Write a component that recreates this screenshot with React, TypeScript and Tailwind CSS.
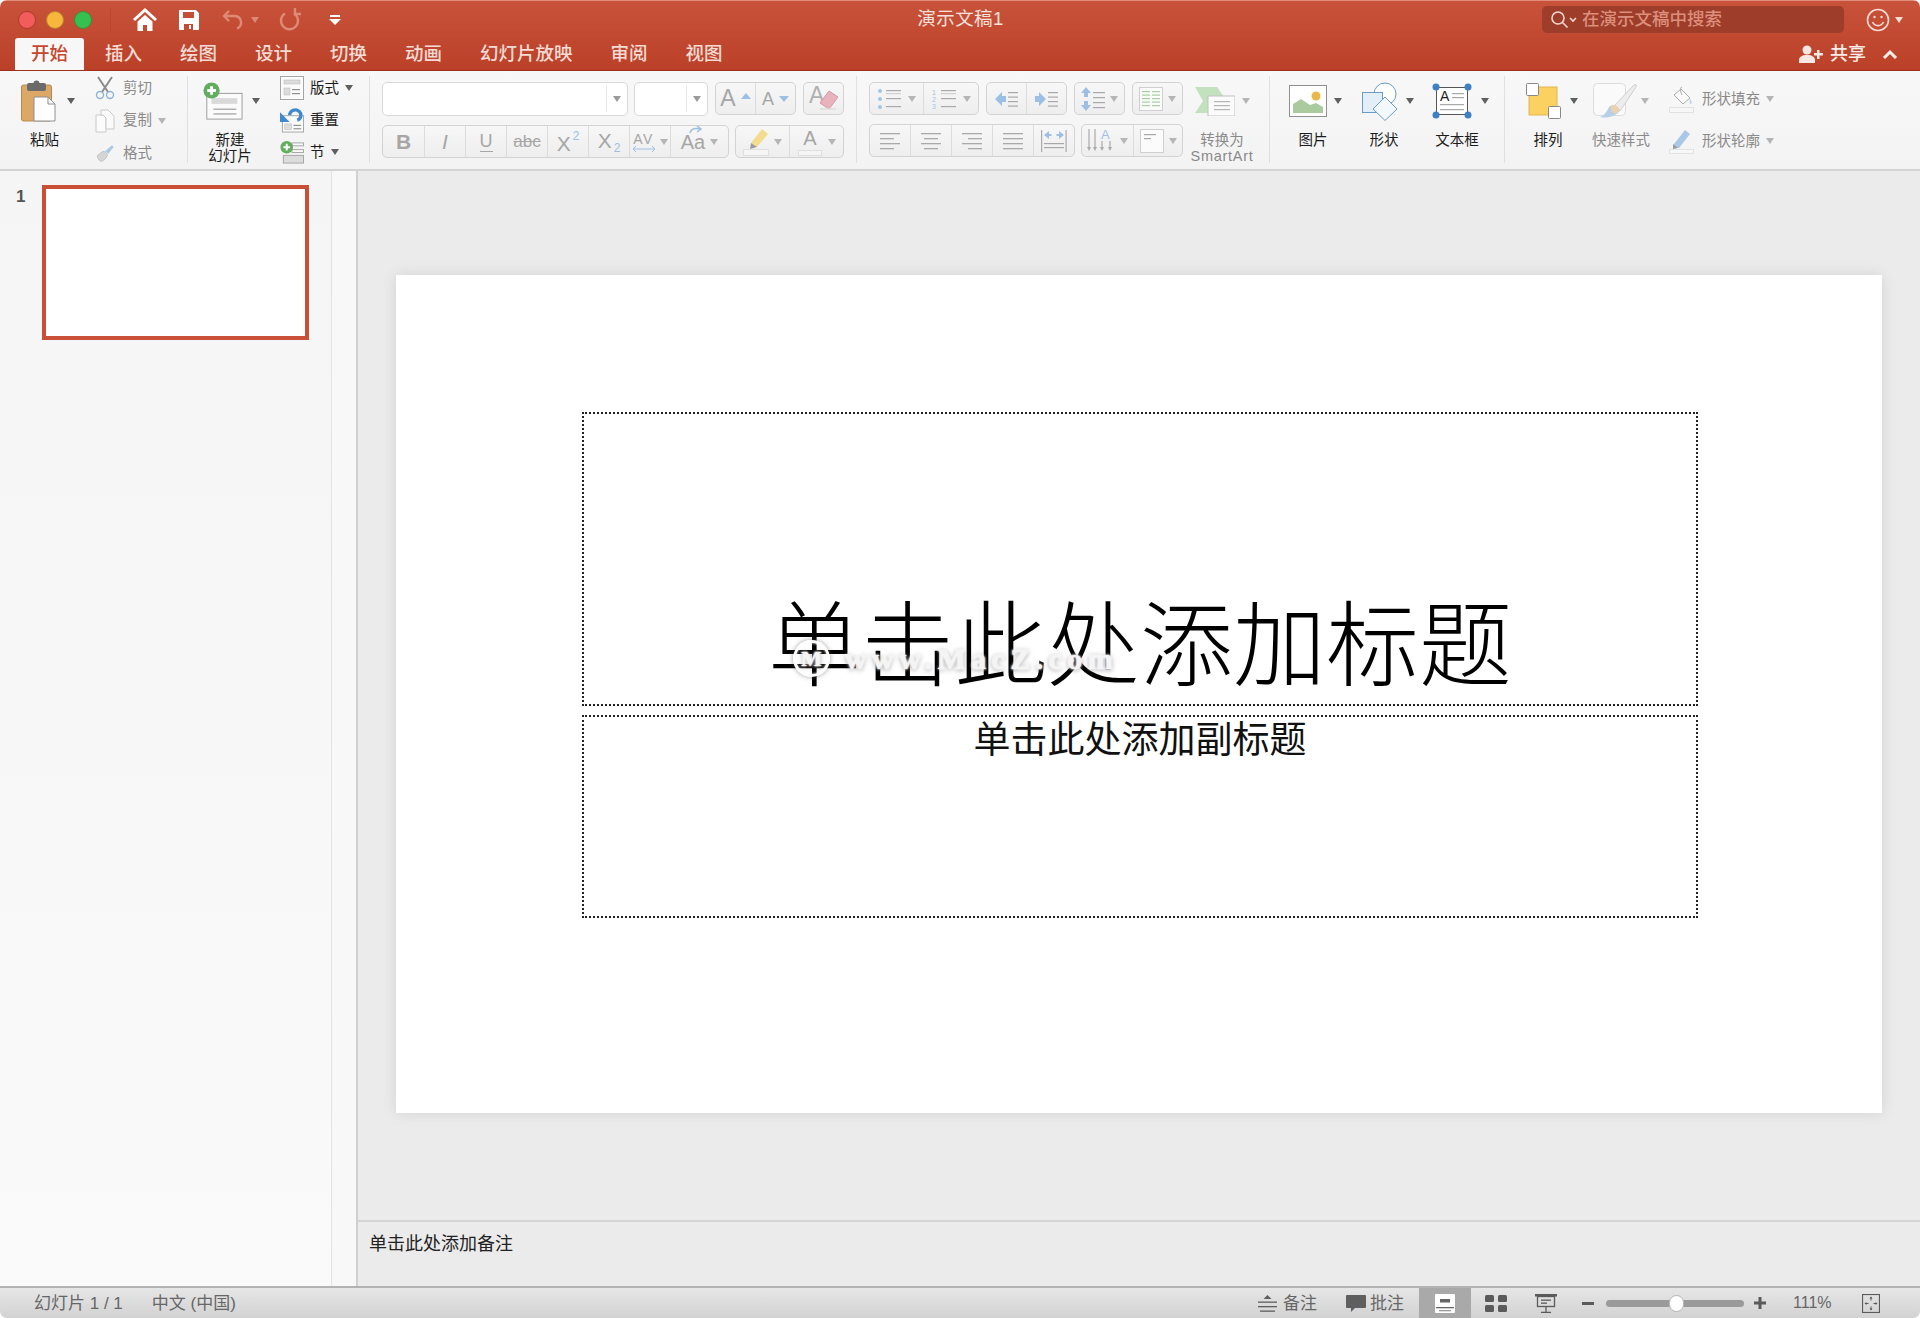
import type { ReactNode } from "react";

const GRAY = "#9a9a9a";

function Caret({ color = "#5f5f5f" }: { color?: string }) {
  return (
    <svg width="8" height="6" viewBox="0 0 8 6" className="shrink-0">
      <path d="M0 0h8L4 6z" fill={color} />
    </svg>
  );
}

function Lines({ x, y, w, n, gap = 5, color = "#a8a8a8" }: { x: number; y: number; w: number; n: number; gap?: number; color?: string }) {
  return (
    <>
      {Array.from({ length: n }).map((_, i) => (
        <rect key={i} x={x} y={y + i * gap} width={w} height="1.2" fill={color} />
      ))}
    </>
  );
}

// title bar icons
const HomeIcon = () => (
  <svg width="26" height="26" viewBox="0 0 26 26">
    <path d="M2 13 13 3l11 10" fill="none" stroke="#fff" strokeWidth="3" />
    <path d="M5.5 14.5 13 8l7.500 6.500V24H15v-6h-4v6H5.500z" fill="#fff" />
  </svg>
);
const SaveIcon = () => (
  <svg width="24" height="24" viewBox="0 0 24 24">
    <path
      fillRule="evenodd"
      d="M3 2h16l3 3v16a1 1 0 0 1-1 1H3a1 1 0 0 1-1-1V3a1 1 0 0 1 1-1zm3 2v6h11V4zm1 12v6h9v-6zm5 1h2v4h-2z"
      fill="#fff"
    />
  </svg>
);
const UndoIcon = () => (
  <svg width="24" height="24" viewBox="0 0 24 24" fill="none" stroke="#dd8a76" strokeWidth="2.4">
    <path d="M8 3 3 8l5 5" />
    <path d="M3 8h11a6.500 6.500 0 0 1 2 12.500" />
  </svg>
);
const RedoIcon = () => (
  <svg width="24" height="24" viewBox="0 0 24 24" fill="none" stroke="#dd8a76" strokeWidth="2.4">
    <path d="M7 5.500a8.500 8.500 0 1 0 9 0" />
    <path d="M17 0v6h6" />
  </svg>
);
const CustomizeIcon = () => (
  <svg width="12" height="12" viewBox="0 0 12 12">
    <rect x="1" y="1" width="10" height="2" fill="#fff" />
    <path d="M0 5h12L6 11z" fill="#fff" />
  </svg>
);
const SearchIcon = () => (
  <svg width="28" height="20" viewBox="0 0 28 20" fill="none" stroke="#f3d9d2" strokeWidth="1.6">
    <circle cx="8" cy="8" r="6" />
    <path d="m12.500 12.500 5 5" />
    <path d="m20 8 3 3 3-3" />
  </svg>
);
const SmileIcon = () => (
  <svg width="24" height="24" viewBox="0 0 24 24" fill="none" stroke="#f6dcd5" strokeWidth="1.6">
    <circle cx="12" cy="12" r="10.500" />
    <circle cx="8.500" cy="9" r="1.200" fill="#f6dcd5" stroke="none" />
    <circle cx="15.500" cy="9" r="1.200" fill="#f6dcd5" stroke="none" />
    <path d="M6.500 14a6 6 0 0 0 11 0" />
  </svg>
);
const ShareIcon = () => (
  <svg width="25" height="18" viewBox="0 0 25 18" fill="#f8e8e4">
    <circle cx="8" cy="5" r="4.500" />
    <path d="M0 18v-3c0-3 3-5 8-5s8 2 8 5v3z" />
    <path d="M18 5h2.500v3H24v2.500h-3.500V14H18v-3.500h-3V8h3z" />
  </svg>
);

// ribbon icons
const PasteIcon = () => (
  <svg width="35" height="42" viewBox="0 0 35 42">
    <rect x="0.500" y="5" width="30" height="36" rx="2" fill="#dba868" stroke="#b98a4f" />
    <rect x="6" y="3" width="19" height="8" rx="2" fill="#6b6b6b" />
    <circle cx="15.500" cy="3.500" r="3" fill="#6b6b6b" />
    <path d="M13 17h14l7 7v17H13z" fill="#fff" stroke="#8f8f8f" />
    <path d="M27 17v7h7" fill="none" stroke="#8f8f8f" />
  </svg>
);
const CutIcon = () => (
  <svg width="20" height="24" viewBox="0 0 20 24" fill="none">
    <path d="M3 1 13 16M17 1 7 16" stroke="#8c8c8c" strokeWidth="2" />
    <circle cx="5" cy="19" r="3.500" stroke="#8fb3d5" strokeWidth="1.400" />
    <circle cx="15" cy="19" r="3.500" stroke="#8fb3d5" strokeWidth="1.400" />
  </svg>
);
const CopyIcon = () => (
  <svg width="20" height="24" viewBox="0 0 20 24" fill="#fbfbfb" stroke="#c9c9c9">
    <path d="M1 6h7l3 3v14H1z" />
    <path d="M6 1h7l6 6v13h-8V9L8 6H6z" />
  </svg>
);
const BrushIcon = () => (
  <svg width="24" height="24" viewBox="0 0 24 24">
    <path d="M3 15c3-3 6-5 8-5l4 4c-1 4-5 8-8 8-1 0-5-4-4-7z" fill="#d5d5d5" stroke="#bdbdbd" />
    <path d="m12 10 8-7c1 0 2 1 2 2l-6 8z" fill="#a9c8e4" />
  </svg>
);
const NewSlideIcon = () => (
  <svg width="42" height="40" viewBox="0 0 42 40">
    <rect x="4" y="12" width="37" height="27" fill="#fbfbfb" stroke="#9a9a9a" />
    <rect x="9" y="17" width="27" height="6" fill="#d9d9d9" />
    <Lines x={11} y={28} w={24} n={2} gap={5} color="#9a9a9a" />
    <circle cx="9" cy="9" r="8.500" fill="#63ad5f" />
    <path d="M7.500 4.500h3v3h3v3h-3v3h-3v-3h-3v-3h3z" fill="#fff" />
  </svg>
);
const LayoutIcon = () => (
  <svg width="24" height="24" viewBox="0 0 24 24">
    <rect x="0.500" y="0.500" width="23" height="23" fill="#fbfbfb" stroke="#a5a5a5" />
    <rect x="4" y="4" width="16" height="4" fill="#dcdcdc" stroke="#b5b5b5" strokeWidth=".5" />
    <rect x="4" y="12" width="6" height="7" fill="#dcdcdc" stroke="#b5b5b5" strokeWidth=".5" />
    <Lines x={12} y={13} w={8} n={2} gap={4} color="#8d8d8d" />
  </svg>
);
const ResetIcon = () => (
  <svg width="25" height="25" viewBox="0 0 25 25">
    <rect x="2.500" y="7.500" width="22" height="17" fill="#fbfbfb" stroke="#a5a5a5" />
    <rect x="5" y="16" width="7" height="6" fill="#dcdcdc" stroke="#b5b5b5" strokeWidth=".5" />
    <Lines x={14} y={17} w={8} n={2} gap={3.500} color="#8d8d8d" />
    <path d="M10 7a6 6 0 0 1 10-4c3 3 2 8-2 9" fill="none" stroke="#3f89cf" strokeWidth="3.500" />
    <path d="M0 4v10h10z" fill="#3f89cf" />
  </svg>
);
const SectionIcon = () => (
  <svg width="25" height="25" viewBox="0 0 25 25">
    <rect x="3.500" y="15.500" width="21" height="8" fill="#dcdcdc" stroke="#a5a5a5" />
    <rect x="12.500" y="2.500" width="12" height="3" fill="#fbfbfb" stroke="#a5a5a5" />
    <rect x="12.500" y="9.500" width="12" height="3" fill="#fbfbfb" stroke="#a5a5a5" />
    <circle cx="7" cy="7" r="6.500" fill="#63ad5f" />
    <path d="M6 3.500h2V6h2.500v2H8v2.500H6V8H3.500V6H6z" fill="#fff" />
  </svg>
);
const SmartArtIcon = () => (
  <svg width="40" height="30" viewBox="0 0 40 30">
    <path d="M0 1h22l10 14-10 12H0l8-12z" fill="#c3e0bf" />
    <rect x="13" y="10" width="27" height="20" fill="#fbfbfb" stroke="#c2c2c2" />
    <Lines x={19} y={15} w={16} n={3} gap={4} color="#b5b5b5" />
  </svg>
);
const PictureIcon = () => (
  <svg width="38" height="32" viewBox="0 0 38 32">
    <rect x="0.500" y="0.500" width="37" height="31" fill="#fff" stroke="#8f8f8f" />
    <circle cx="27" cy="11" r="4.500" fill="#e9b84c" />
    <path d="M4 28v-9l8-5 9 6 6-2 7 4v6z" fill="#a9cb9d" />
  </svg>
);
const ShapeIcon = () => (
  <svg width="36" height="39" viewBox="0 0 36 39">
    <circle cx="23" cy="12" r="11" fill="#fff" stroke="#6a9cc9" />
    <rect x="0.500" y="10.500" width="20" height="20" fill="#e3eef8" stroke="#6a9cc9" />
    <path d="M23 15 35 27 23 38.500 11 27z" fill="#f3f8fc" stroke="#6a9cc9" />
  </svg>
);
const TextBoxIcon = () => (
  <svg width="40" height="36" viewBox="0 0 40 36">
    <rect x="4.500" y="4.500" width="31" height="27" fill="#fff" stroke="#555" />
    <text x="8" y="18" fontSize="14" fontWeight="500" fill="#222" fontFamily="Liberation Sans">A</text>
    <Lines x={20} y={10} w={12} n={2} gap={4} />
    <Lines x={8} y={21} w={24} n={2} gap={5} />
    <circle cx="4" cy="4" r="3.500" fill="#3f7fc6" />
    <circle cx="36" cy="4" r="3.500" fill="#3f7fc6" />
    <circle cx="4" cy="32" r="3.500" fill="#3f7fc6" />
    <circle cx="36" cy="32" r="3.500" fill="#3f7fc6" />
  </svg>
);
const ArrangeIcon = () => (
  <svg width="35" height="36" viewBox="0 0 35 36">
    <rect x="3" y="4" width="28" height="28" fill="#fbd161" stroke="#e1b64c" />
    <rect x="0.500" y="0.500" width="12" height="12" rx="1" fill="#fff" stroke="#888" />
    <rect x="22.500" y="23.500" width="12" height="12" rx="1" fill="#fff" stroke="#888" />
  </svg>
);
const QuickStyleIcon = () => (
  <svg width="45" height="36" viewBox="0 0 45 36">
    <rect x="0.500" y="0.500" width="32" height="32" rx="4" fill="#fafafa" stroke="#dcdcdc" />
    <path d="M20 24 41 2c2-1 3 0 2 2L27 28z" fill="#ededed" stroke="#cfcfcf" />
    <path d="M16 24c3-3 7-3 11 3-3 6-13 9-20 7 5-2 7-6 9-10z" fill="#b8d0e6" />
    <path d="M18 23c3-2 6-1 9 4l-5 4c-3-2-5-5-4-8z" fill="#ecd2b0" />
  </svg>
);
const FillIcon = () => (
  <svg width="25" height="28" viewBox="0 0 25 28">
    <path d="m12 4 9 9-7 6-9-9z" fill="#fafafa" stroke="#aaa" />
    <path d="M13 2c-2 0-2 4 0 8" fill="none" stroke="#aaa" />
    <path d="M21 14c2 2 2 4 1 5s-2-2-1-5z" fill="#bcd3ea" />
    <rect x="0.500" y="22.500" width="24" height="5" fill="#f7f7f7" stroke="#e2e2e2" />
  </svg>
);
const PenIcon = () => (
  <svg width="25" height="25" viewBox="0 0 25 25">
    <path d="m5 15 11-14 5 4-11 14H5z" fill="#a9c8e8" />
    <path d="m4 15 5 4-5 1z" fill="#9a9a9a" />
    <rect x="0.500" y="20.500" width="24" height="4" fill="#f7f7f7" stroke="#e2e2e2" />
  </svg>
);

// small formatting glyphs, drawn in the disabled grey of the ribbon
function ListIcon({ numbered }: { numbered?: boolean }) {
  return (
    <svg width="26" height="22" viewBox="0 0 26 22">
      {numbered ? (
        <>
          <text x="0" y="7" fontSize="7" fill="#a4c4e2" fontFamily="Liberation Sans">1</text>
          <text x="0" y="14" fontSize="7" fill="#a4c4e2" fontFamily="Liberation Sans">2</text>
          <text x="0" y="21" fontSize="7" fill="#a4c4e2" fontFamily="Liberation Sans">3</text>
        </>
      ) : (
        <>
          <circle cx="3" cy="3" r="2" fill="#a4c4e2" />
          <circle cx="3" cy="11" r="2" fill="#a4c4e2" />
          <circle cx="3" cy="19" r="2" fill="#a4c4e2" />
        </>
      )}
      <Lines x={9} y={2} w={15} n={3} gap={8} color="#a9a9a9" />
      <Lines x={9} y={5} w={15} n={1} color="#d0d0d0" />
    </svg>
  );
}
function IndentIcon({ right }: { right?: boolean }) {
  return (
    <svg width="24" height="20" viewBox="0 0 24 20">
      <path d={right ? "M0 7h4V3l7 7-7 7v-4H0z" : "M11 7H7V3l-7 7 7 7v-4h4z"} fill="#9cc0e3" />
      <Lines x={13} y={3} w={10} n={4} gap={4.500} />
    </svg>
  );
}
const SpacingIcon = () => (
  <svg width="24" height="24" viewBox="0 0 24 24">
    <path d="M5 0 10 6H7v4H3V6H0zM5 24l5-6H7v-4H3v4H0z" fill="#9cc0e3" />
    <Lines x={12} y={5} w={12} n={4} gap={5} />
  </svg>
);
const ColumnsIcon = () => (
  <svg width="24" height="24" viewBox="0 0 24 24">
    <rect x="0.500" y="0.500" width="23" height="23" fill="#fbfbfb" stroke="#cfcfcf" />
    <Lines x={3} y={4} w={8} n={5} gap={3.500} color="#a9cfa2" />
    <Lines x={13} y={4} w={8} n={5} gap={3.500} color="#a9cfa2" />
  </svg>
);
function AlignIcon({ kind }: { kind: "left" | "center" | "right" | "justify" }) {
  const rows = [20, 14, 20, 14];
  return (
    <svg width="21" height="18" viewBox="0 0 21 18">
      {rows.map((w, i) => {
        const width = kind === "justify" ? 20 : w;
        const x = kind === "left" || kind === "justify" ? 0 : kind === "center" ? (20 - width) / 2 : 20 - width;
        return <rect key={i} x={x} y={1 + i * 5} width={width} height="1.300" fill="#aaa" />;
      })}
    </svg>
  );
}
const DistributeIcon = () => (
  <svg width="26" height="24" viewBox="0 0 26 24">
    <rect x="0" y="1" width="1.200" height="22" fill="#aaa" />
    <rect x="24.500" y="1" width="1.200" height="22" fill="#aaa" />
    <path d="M3 6 8 2v3h2.500v2H8v3zM23 6l-5-4v3h-2.500v2H18v3z" fill="#9cc0e3" />
    <Lines x={3} y={14} w={20} n={2} gap={4} />
  </svg>
);
const TextDirIcon = () => (
  <svg width="28" height="24" viewBox="0 0 28 24">
    <path d="M2 0v20M8 0v20" stroke="#aaa" strokeWidth="1.200" />
    <path d="M0 18l2 4 2-4zM6 18l2 4 2-4zM13 18l2 4 2-4zM21 18l2 4 2-4z" fill="#aaa" />
    <path d="M15 12v8M23 12v8" stroke="#aaa" strokeWidth="1.200" />
    <text x="14" y="10" fontSize="13" fill="#9cc0e3" fontFamily="Liberation Sans">A</text>
  </svg>
);
const TextAlignBoxIcon = () => (
  <svg width="24" height="24" viewBox="0 0 24 24">
    <rect x="0.500" y="0.500" width="23" height="23" fill="#fbfbfb" stroke="#cfcfcf" />
    <Lines x={4} y={5} w={12} n={1} />
    <Lines x={4} y={9} w={7} n={1} />
  </svg>
);
const HighlightIcon = () => (
  <svg width="26" height="28" viewBox="0 0 26 28">
    <path d="m8 15 11-14 6 5-11 13z" fill="#f4dc8f" />
    <path d="m8 15 6 4-7 2z" fill="#9a9a9a" />
    <rect x="0.500" y="21.500" width="25" height="6" fill="#f5f5f5" stroke="#dfdfdf" />
  </svg>
);
const ClearIcon = () => (
  <svg width="30" height="28" viewBox="0 0 30 28">
    <text x="0" y="18" fontSize="23" fill="#b0b0b0" fontFamily="Liberation Sans">A</text>
    <path d="m20 6 9 6-9 12-9-6z" fill="#e8b3bd" stroke="#d797a5" />
    <path d="M11 24h16" fill="none" stroke="#dcdcdc" strokeWidth="1.500" />
  </svg>
);

// status bar icons
const NotesIcon = () => (
  <svg width="19" height="17" viewBox="0 0 19 17" fill="#5f5f5f">
    <path d="M9.500 0 13.500 4h-8z" />
    <rect y="6.500" width="19" height="1.300" />
    <rect y="11" width="19" height="1.300" />
    <rect x="2" y="15.500" width="15" height="1.300" />
  </svg>
);
const CommentIcon = () => (
  <svg width="20" height="17" viewBox="0 0 20 17">
    <path d="M1 0h18a1 1 0 0 1 1 1v11a1 1 0 0 1-1 1H9l-4 4v-4H1a1 1 0 0 1-1-1V1a1 1 0 0 1 1-1z" fill="#5f5f5f" />
  </svg>
);
const NormalViewIcon = () => (
  <svg width="20" height="19" viewBox="0 0 20 19">
    <rect width="20" height="19" rx="1" fill="#fff" />
    <rect x="5" y="5" width="10" height="3.500" fill="#666" />
    <rect x="1" y="13" width="18" height="1.300" fill="#666" />
    <rect x="4" y="16" width="12" height="1.300" fill="#999" />
  </svg>
);
const GridViewIcon = () => (
  <svg width="22" height="17" viewBox="0 0 22 17" fill="#5a5a5a">
    <rect width="9" height="7" rx="1.500" />
    <rect x="13" width="9" height="7" rx="1.500" />
    <rect y="10" width="9" height="7" rx="1.500" />
    <rect x="13" y="10" width="9" height="7" rx="1.500" />
  </svg>
);
const ShowIcon = () => (
  <svg width="22" height="19" viewBox="0 0 22 19">
    <rect width="22" height="2.500" fill="#5a5a5a" />
    <rect x="2.500" y="2.500" width="17" height="10" fill="none" stroke="#5a5a5a" strokeWidth="1.300" />
    <rect x="6" y="5.500" width="10" height="1.300" fill="#5a5a5a" />
    <rect x="6" y="8.500" width="6" height="1.300" fill="#5a5a5a" />
    <path d="M11 13v5M6 18.300h10" stroke="#5a5a5a" strokeWidth="1.300" />
  </svg>
);
const FitIcon = () => (
  <svg width="18" height="19" viewBox="0 0 18 19" fill="none" stroke="#5a5a5a">
    <rect x="0.500" y="0.500" width="17" height="18" strokeWidth="1.200" />
    <path d="M9 3v3.500M9 12.500V16M3 9.500h3.500M11.500 9.500H15" />
    <path d="M9 2.500 7.500 4.500h3zM9 16.500l-1.500-2h3zM2.500 9.500l2-1.500v3zM15.500 9.500l-2-1.500v3z" fill="#5a5a5a" stroke="none" />
  </svg>
);

function Large({
  width,
  pad,
  gap,
  icon,
  caret = true,
  gray,
  children,
}: {
  width: number;
  pad: number;
  gap: number;
  icon: ReactNode;
  caret?: boolean;
  gray?: boolean;
  children: ReactNode;
}) {
  return (
    <div className="shrink-0" style={{ width }}>
      <div className="flex h-[50px] items-center" style={{ paddingLeft: pad, gap }}>
        {icon}
        {caret && <Caret color={gray ? "#b5b5b5" : "#5f5f5f"} />}
      </div>
      <div className={`mt-[6px] text-center text-[14.500px] leading-[16px] ${gray ? "text-[#8a8a8a]" : "text-[#1c1c1c]"}`}>{children}</div>
    </div>
  );
}

function Small({
  icon,
  iconWidth,
  gap,
  label,
  dark,
  caret,
  height = 24,
}: {
  icon: ReactNode;
  iconWidth: number;
  gap: number;
  label: string;
  dark?: boolean;
  caret?: boolean;
  height?: number;
}) {
  return (
    <div className="flex items-center" style={{ height }}>
      <div className="flex shrink-0 items-center justify-center" style={{ width: iconWidth, marginRight: gap }}>
        {icon}
      </div>
      <span className={`whitespace-nowrap text-[14.500px] leading-none ${dark ? "text-[#1c1c1c]" : "text-[#8a8a8a]"}`}>{label}</span>
      {caret && (
        <span className="ml-[6px]">
          <Caret color={dark ? "#5f5f5f" : "#b5b5b5"} />
        </span>
      )}
    </div>
  );
}

function Tool({ width, children }: { width: number; children: ReactNode }) {
  return (
    <div
      className="flex h-[33px] shrink-0 overflow-hidden rounded-[5px] border border-[#d3d3d3] bg-linear-to-b from-[#f7f7f7] to-[#eeeeee]"
      style={{ width }}
    >
      {children}
    </div>
  );
}

function Cell({ width, caret, children }: { width?: number; caret?: boolean; children?: ReactNode }) {
  return (
    <div
      className="flex h-full items-center justify-center gap-[5px] border-l border-[#dcdcdc] first:border-l-0"
      style={width ? { width } : { flex: 1 }}
    >
      {children}
      {caret && <Caret color="#b5b5b5" />}
    </div>
  );
}

const Letter = ({ className, children }: { className?: string; children: ReactNode }) => (
  <span className={`font-['Liberation_Sans'] leading-none text-[#a6a6a6] ${className ?? ""}`}>{children}</span>
);

function Dropdown({ width, caretArea }: { width: number; caretArea: number }) {
  return (
    <div className="flex h-[34px] shrink-0 items-center justify-end rounded-[5px] border border-[#d9d9d9] bg-white" style={{ width }}>
      <div className="flex h-[26px] items-center justify-center border-l border-[#e6e6e6]" style={{ width: caretArea }}>
        <Caret color={GRAY} />
      </div>
    </div>
  );
}

function Ribbon() {
  return (
    <div className="flex h-[100px] shrink-0 border-b-2 border-[#d3d3d3] bg-linear-to-b from-[#f8f8f8] to-[#f3f3f3] pt-[5px]">
      {/* clipboard */}
      <div className="flex h-[87px] w-[188px] shrink-0 border-r border-[#e0e0e0] pl-[8px]">
        <Large width={73} pad={13} gap={11} icon={<PasteIcon />}>
          粘贴
        </Large>
        <div className="ml-[14px] flex flex-col gap-[8.500px]">
          <Small icon={<CutIcon />} iconWidth={20} gap={8} label="剪切" />
          <Small icon={<CopyIcon />} iconWidth={20} gap={8} label="复制" caret />
          <Small icon={<BrushIcon />} iconWidth={20} gap={8} label="格式" />
        </div>
      </div>
      {/* slides */}
      <div className="flex h-[87px] w-[182px] shrink-0 border-r border-[#e0e0e0] pl-[12px]">
        <Large width={60} pad={3} gap={9} icon={<NewSlideIcon />}>
          新建
          <br />
          幻灯片
        </Large>
        <div className="ml-[20px] flex flex-col gap-[8px]">
          <Small icon={<LayoutIcon />} iconWidth={24} gap={6} label="版式" dark caret />
          <Small icon={<ResetIcon />} iconWidth={24} gap={6} label="重置" dark />
          <Small icon={<SectionIcon />} iconWidth={24} gap={6} label="节" dark caret />
        </div>
      </div>
      {/* font */}
      <div className="flex h-[87px] w-[487px] shrink-0 flex-col gap-[9px] border-r border-[#e0e0e0] pl-[12px] pt-[6px]">
        <div className="flex">
          <Dropdown width={246} caretArea={21} />
          <div className="ml-[6px]">
            <Dropdown width={74} caretArea={21} />
          </div>
          <div className="ml-[7px]">
            <Tool width={81}>
              <Cell>
                <Letter className="text-[23px]">A</Letter>
                <svg width="10" height="6" viewBox="0 0 10 6" className="-mt-[6px]"><path d="M5 0l5 6H0z" fill="#9cc0e3" /></svg>
              </Cell>
              <Cell>
                <Letter className="text-[18px]">A</Letter>
                <svg width="10" height="6" viewBox="0 0 10 6"><path d="M0 0h10L5 6z" fill="#9cc0e3" /></svg>
              </Cell>
            </Tool>
          </div>
          <div className="ml-[7px]">
            <Tool width={41}>
              <Cell>
                <ClearIcon />
              </Cell>
            </Tool>
          </div>
        </div>
        <div className="flex">
          <Tool width={347}>
            <Cell width={41}>
              <Letter className="text-[21px] font-bold">B</Letter>
            </Cell>
            <Cell width={41}>
              <Letter className="text-[21px] italic">I</Letter>
            </Cell>
            <Cell width={41}>
              <Letter className="border-b border-[#a6a6a6] pb-[1px] text-[18px]">U</Letter>
            </Cell>
            <Cell width={41}>
              <Letter className="text-[17px] line-through">abc</Letter>
            </Cell>
            <Cell width={41}>
              <span className="flex items-start gap-[2px]">
                <Letter className="pt-[3px] text-[21px]">X</Letter>
                <span className="font-['Liberation_Sans'] text-[12px] leading-none text-[#9cc0e3]">2</span>
              </span>
            </Cell>
            <Cell width={41}>
              <span className="flex items-end gap-[2px]">
                <Letter className="pb-[3px] text-[21px]">X</Letter>
                <span className="font-['Liberation_Sans'] text-[12px] leading-none text-[#9cc0e3]">2</span>
              </span>
            </Cell>
            <Cell width={41} caret>
              <span className="flex flex-col items-center">
                <Letter className="text-[14px] tracking-[1.500px]">AV</Letter>
                <svg width="22" height="6" viewBox="0 0 22 6" fill="none" stroke="#9cc0e3"><path d="M0 3h22M3 0 0 3l3 3M19 0l3 3-3 3" /></svg>
              </span>
            </Cell>
            <Cell caret>
              <span className="relative pt-[5px]">
                <Letter className="text-[20px]">Aa</Letter>
                <svg width="14" height="8" viewBox="0 0 14 8" className="absolute top-[-1px] left-[8px]" fill="none" stroke="#9cc0e3" strokeWidth="1.500"><path d="M1 7c1-4 5-5 10-4M8 0l4 3-4 3" /></svg>
              </span>
            </Cell>
          </Tool>
          <div className="ml-[6px]">
            <Tool width={109}>
              <Cell width={53}>
                <HighlightIcon />
                <Caret color="#b5b5b5" />
              </Cell>
              <Cell>
                <span className="flex w-[26px] flex-col items-center gap-[2px]">
                  <Letter className="text-[20px]">A</Letter>
                  <span className="h-[6px] w-[24px] border border-[#dfdfdf] bg-[#f5f5f5]" />
                </span>
                <Caret color="#b5b5b5" />
              </Cell>
            </Tool>
          </div>
        </div>
      </div>
      {/* paragraph */}
      <div className="flex h-[87px] w-[413px] shrink-0 border-r border-[#e0e0e0] pl-[12px]">
        <div className="flex w-[314px] shrink-0 flex-col gap-[9px] pt-[6px]">
          <div className="flex">
            <Tool width={110}>
              <Cell width={53} caret>
                <ListIcon />
              </Cell>
              <Cell caret>
                <ListIcon numbered />
              </Cell>
            </Tool>
            <div className="ml-[7px]">
              <Tool width={81}>
                <Cell>
                  <IndentIcon />
                </Cell>
                <Cell>
                  <IndentIcon right />
                </Cell>
              </Tool>
            </div>
            <div className="ml-[7px]">
              <Tool width={51}>
                <Cell caret>
                  <SpacingIcon />
                </Cell>
              </Tool>
            </div>
            <div className="ml-[7px]">
              <Tool width={51}>
                <Cell caret>
                  <ColumnsIcon />
                </Cell>
              </Tool>
            </div>
          </div>
          <div className="flex">
            <Tool width={206}>
              <Cell>
                <AlignIcon kind="left" />
              </Cell>
              <Cell>
                <AlignIcon kind="center" />
              </Cell>
              <Cell>
                <AlignIcon kind="right" />
              </Cell>
              <Cell>
                <AlignIcon kind="justify" />
              </Cell>
              <Cell>
                <DistributeIcon />
              </Cell>
            </Tool>
            <div className="ml-[6px]">
              <Tool width={102}>
                <Cell width={51} caret>
                  <TextDirIcon />
                </Cell>
                <Cell caret>
                  <TextAlignBoxIcon />
                </Cell>
              </Tool>
            </div>
          </div>
        </div>
        <div className="ml-[9px]">
          <Large width={60} pad={3} gap={7} gray icon={<SmartArtIcon />}>
            转换为
            <br />
            <span className="-mx-[5px] inline-block whitespace-nowrap tracking-[.7px]">SmartArt</span>
          </Large>
        </div>
      </div>
      {/* insert */}
      <div className="flex h-[87px] w-[235px] shrink-0 border-r border-[#e0e0e0] pl-[13px]">
        <Large width={60} pad={6} gap={7} icon={<PictureIcon />}>
          图片
        </Large>
        <div className="ml-[11px]">
          <Large width={60} pad={8} gap={8} icon={<ShapeIcon />}>
            形状
          </Large>
        </div>
        <div className="ml-[8px]">
          <Large width={70} pad={10} gap={9} icon={<TextBoxIcon />}>
            文本框
          </Large>
        </div>
      </div>
      {/* drawing */}
      <div className="flex h-[87px] flex-1 pl-[13px]">
        <Large width={60} pad={8} gap={9} icon={<ArrangeIcon />}>
          排列
        </Large>
        <div className="ml-[11px]">
          <Large width={64} pad={4} gap={3} gray icon={<QuickStyleIcon />}>
            快速样式
          </Large>
        </div>
        <div className="ml-[16px] mt-[9px] flex flex-col gap-[14px]">
          <Small icon={<FillIcon />} iconWidth={25} gap={8} label="形状填充" caret height={28} />
          <Small icon={<PenIcon />} iconWidth={25} gap={8} label="形状轮廓" caret height={28} />
        </div>
      </div>
    </div>
  );
}

const TABS = ["插入", "绘图", "设计", "切换", "动画", "幻灯片放映", "审阅", "视图"];

export default function App() {
  return (
    <div className="h-[1318px] w-[1920px] bg-white font-['Liberation_Sans','Noto_Sans_CJK_SC',sans-serif]">
      <div className="flex h-full flex-col overflow-hidden rounded-[7px]">
        {/* title bar + tabs */}
        <div className="h-[71px] shrink-0 border-b border-t border-b-[#9d2f1b] border-t-[#e08e7b] bg-linear-to-b from-[#c8533a] to-[#bb4028]">
          <div className="flex h-[37px] items-center">
            <div className="flex flex-1 items-center pl-[18px]">
              <div className="flex gap-[10px]">
                <span className="h-[18px] w-[18px] rounded-full border border-[#b0392c] bg-[#f25c5c]" />
                <span className="h-[18px] w-[18px] rounded-full border border-[#b8812c] bg-[#f6b73c]" />
                <span className="h-[18px] w-[18px] rounded-full border border-[#3f8a3a] bg-[#35c14f]" />
              </div>
              <div className="ml-[18px] h-[24px] w-px bg-[#b9472f]" />
              <div className="ml-[21px]">
                <HomeIcon />
              </div>
              <div className="ml-[19px]">
                <SaveIcon />
              </div>
              <div className="ml-[20px] flex items-center gap-[6px]">
                <UndoIcon />
                <Caret color="#dd8a76" />
              </div>
              <div className="ml-[19px]">
                <RedoIcon />
              </div>
              <div className="ml-[27px]">
                <CustomizeIcon />
              </div>
            </div>
            <div className="whitespace-nowrap text-[18.500px] leading-none tracking-[.4px] text-[#f8e2dc]">演示文稿1</div>
            <div className="flex flex-1 items-center justify-end pr-[17px]">
              <div className="flex h-[27px] w-[302px] items-center rounded-[5px] bg-[#9e3d29] pl-[8px]">
                <SearchIcon />
                <span className="ml-[4px] text-[17.500px] font-medium leading-none text-[#dc8f7d]">在演示文稿中搜索</span>
              </div>
              <div className="ml-[22px] flex items-center gap-[5px]">
                <SmileIcon />
                <Caret color="#f6dcd5" />
              </div>
            </div>
          </div>
          <div className="flex h-[32px] items-end justify-between">
            <div className="flex h-full items-end pl-[15px]">
              <div className="mr-[2px] flex h-[32px] w-[69px] items-center justify-center rounded-t-[3px] bg-[#f7f7f7] text-[18.500px] font-medium text-[#c5472e]">
                开始
              </div>
              {TABS.map((tab) => (
                <div key={tab} className="flex h-[32px] items-center whitespace-nowrap px-[19px] text-[18.500px] font-medium text-[#f6dcd5]">
                  {tab}
                </div>
              ))}
            </div>
            <div className="flex h-[32px] items-center pr-[22px]">
              <ShareIcon />
              <span className="ml-[6px] text-[18px] font-medium text-[#fbeeea]">共享</span>
              <svg width="16" height="10" viewBox="0 0 16 10" className="ml-[16px]" fill="none" stroke="#fbeeea" strokeWidth="3">
                <path d="m2 9 6-6 6 6" />
              </svg>
            </div>
          </div>
        </div>

        <Ribbon />

        {/* body */}
        <div className="flex min-h-0 flex-1">
          <div className="flex w-[332px] shrink-0 border-r border-[#e3e3e3] bg-linear-to-b from-[#f5f5f5] to-[#fafafa] pl-[16px] pt-[14px]">
            <div className="w-[26px] text-[17px] font-bold leading-[24px] text-[#555]">1</div>
            <div className="h-[155px] w-[267px] border-4 border-[#c94f36] bg-white" />
          </div>
          <div className="w-[26px] shrink-0 border-r-2 border-[#d0d0d0] bg-[#f8f8f8]" />
          <div className="flex min-w-0 flex-1 flex-col bg-[#ebebeb]">
            <div className="min-h-0 flex-1 pl-[38px] pt-[104px]">
              <div className="relative h-[838px] w-[1486px] bg-white pl-[186px] pt-[137px] shadow-[0_0_14px_rgba(0,0,0,0.1)]">
                <div className="flex h-[294px] w-[1116px] items-end justify-center border-2 border-dotted border-[#222] pb-[10px] text-[93px] font-light leading-none text-black">
                  单击此处添加标题
                </div>
                <div className="mt-[9px] flex h-[203px] w-[1116px] justify-center border-2 border-dotted border-[#222] pt-[2px] text-[37px] font-normal leading-[44px] text-[#111]">
                  单击此处添加副标题
                </div>
                {/* site watermark */}
                <div className="absolute left-[397px] top-[365px] flex items-center whitespace-nowrap font-['Liberation_Serif'] font-bold text-[#f4f4f4] [text-shadow:0_0_2px_#fff,0_0_3px_#fff,0_1px_5px_rgba(90,90,90,0.75)]">
                  <span className="flex h-[37px] w-[37px] items-center justify-center rounded-full border-[3px] border-white text-[22px] shadow-[0_0_5px_rgba(90,90,90,0.6),inset_0_0_3px_rgba(255,255,255,0.9)]">
                    M
                  </span>
                  <span className="ml-[15px] text-[30px] leading-none tracking-[5.400px]">www.MacZ.com</span>
                </div>
              </div>
            </div>
            <div className="flex h-[66px] shrink-0 items-start border-t-2 border-[#d3d3d3] pl-[11px] pt-[9px] text-[18px] leading-[26px] text-[#222]">
              单击此处添加备注
            </div>
          </div>
        </div>

        {/* status bar */}
        <div className="flex h-[32px] shrink-0 items-center border-t-2 border-[#b3b3b3] bg-linear-to-b from-[#e6e6e6] to-[#d2d2d2] text-[17px] leading-none text-[#666]">
          <span className="ml-[34px] whitespace-nowrap">幻灯片 1 / 1</span>
          <span className="ml-[29px] whitespace-nowrap">中文 (中国)</span>
          <div className="ml-auto flex h-full items-center pr-[40px]">
            <NotesIcon />
            <span className="ml-[6px]">备注</span>
            <div className="ml-[29px]">
              <CommentIcon />
            </div>
            <span className="ml-[4px]">批注</span>
            <div className="ml-[15px] flex h-full w-[52px] items-center justify-center bg-[#a9a9a9]">
              <NormalViewIcon />
            </div>
            <div className="ml-[14px]">
              <GridViewIcon />
            </div>
            <div className="ml-[28px]">
              <ShowIcon />
            </div>
            <div className="ml-[25px] h-[3px] w-[12px] bg-[#5a5a5a]" />
            <div className="relative ml-[12px] h-[7px] w-[138px] rounded-full bg-[#9a9a9a]">
              <div className="absolute left-[63px] top-[-5px] h-[17px] w-[15px] rounded-full border border-[#b5b5b5] bg-white" />
            </div>
            <svg width="12" height="12" viewBox="0 0 12 12" className="ml-[10px]" fill="#5a5a5a">
              <path d="M4.500 0h3v4.500H12v3H7.500V12h-3V7.500H0v-3h4.500z" />
            </svg>
            <span className="ml-[27px] w-[38px] whitespace-nowrap text-[16px]">111%</span>
            <div className="ml-[31px]">
              <FitIcon />
            </div>
          </div>
        </div>
      </div>
    </div>
  );
}
